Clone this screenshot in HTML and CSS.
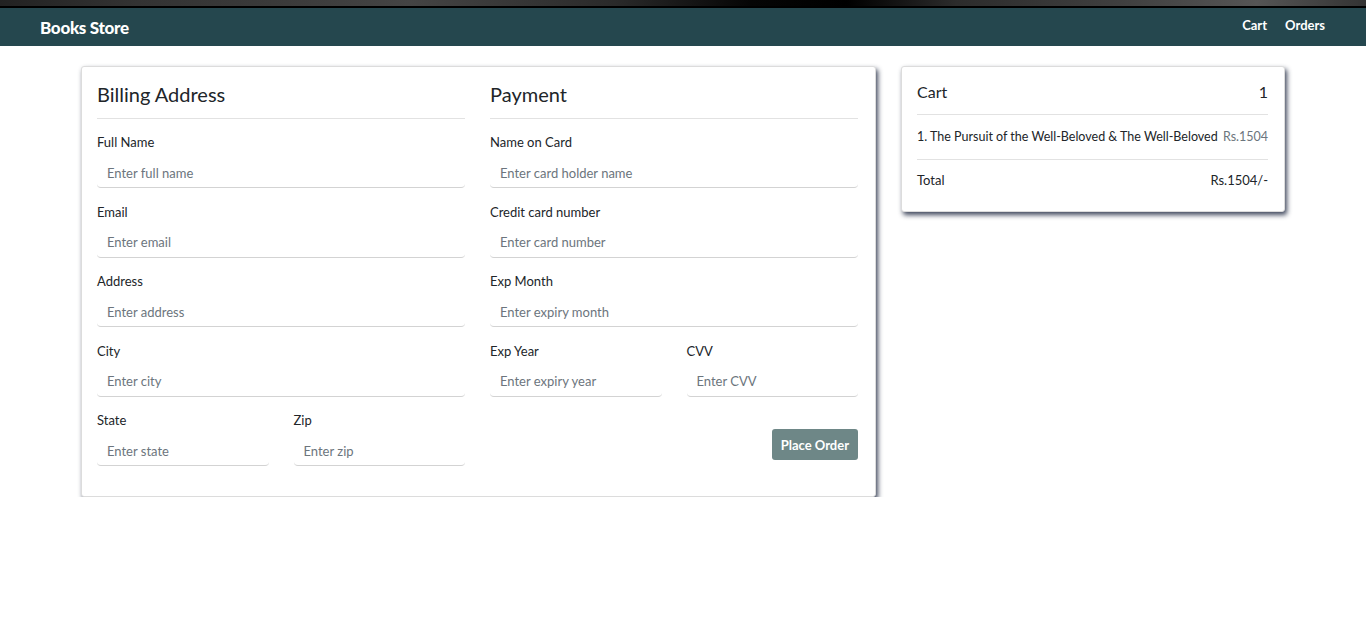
FILE: index.html
```html
<!DOCTYPE html>
<html lang="en">
<head>
<meta charset="utf-8">
<title>Books Store - Checkout</title>
<link rel="stylesheet" href="styles.css">
</head>
<body>
<div class="topstrip"></div>
<nav class="navbar">
  <a class="brand" href="#">Books Store</a>
  <div class="navlinks">
    <a href="#">Cart</a>
    <a href="#">Orders</a>
  </div>
</nav>
<main class="page">
  <section class="card checkout">
    <div class="col">
      <h2 class="heading">Billing Address</h2>
      <hr class="rule">
      <div class="group"><label>Full Name</label><input type="text" placeholder="Enter full name"></div>
      <div class="group"><label>Email</label><input type="text" placeholder="Enter email"></div>
      <div class="group"><label>Address</label><input type="text" placeholder="Enter address"></div>
      <div class="group"><label>City</label><input type="text" placeholder="Enter city"></div>
      <div class="pair">
        <div class="group"><label>State</label><input type="text" placeholder="Enter state"></div>
        <div class="group"><label>Zip</label><input type="text" placeholder="Enter zip"></div>
      </div>
    </div>
    <div class="col">
      <h2 class="heading">Payment</h2>
      <hr class="rule">
      <div class="group"><label>Name on Card</label><input type="text" placeholder="Enter card holder name"></div>
      <div class="group"><label>Credit card number</label><input type="text" placeholder="Enter card number"></div>
      <div class="group"><label>Exp Month</label><input type="text" placeholder="Enter expiry month"></div>
      <div class="pair">
        <div class="group"><label>Exp Year</label><input type="text" placeholder="Enter expiry year"></div>
        <div class="group"><label>CVV</label><input type="text" placeholder="Enter CVV"></div>
      </div>
      <div class="actions"><button class="btn">Place Order</button></div>
    </div>
  </section>
  <aside class="card cart">
    <div class="cart-row cart-title"><span>Cart</span><span>1</span></div>
    <hr class="rule">
    <div class="cart-row cart-item"><span>1. The Pursuit of the Well-Beloved &amp; The Well-Beloved</span><span class="price">Rs.1504</span></div>
    <hr class="rule rule-last">
    <div class="cart-row cart-total"><span>Total</span><span>Rs.1504/-</span></div>
  </aside>
</main>
</body>
</html>
```
FILE: styles.css
```css
* { box-sizing: border-box; }
body {
  margin: 0;
  font-family: Lato, "Noto Sans", sans-serif;
  color: #212529;
  background: #fff;
}
.topstrip {
  height: 8px;
  background:
    linear-gradient(180deg, transparent 0, transparent 6px, #000 6px, #000 8px),
    linear-gradient(90deg, #222 0%, #333 10%, #3a3a3a 20%, #444 30%, #2a2a2a 45%, #050505 55%, #000 62%, #2c2c2c 70%, #3f3f3f 82%, #555 92%, #333 100%);
}
.navbar {
  height: 38px;
  background: #25474e;
  display: flex;
  align-items: center;
  justify-content: space-between;
  padding: 0 41px 0 40px;
}
.navbar a { color: #fff; text-decoration: none; }
.brand { font-weight: 900; font-size: 17px; letter-spacing: -0.3px; }
.navlinks { display: flex; gap: 18px; font-size: 13px; font-weight: 700; padding-bottom: 4px; padding-left: 2px; }
.page {
  display: flex;
  align-items: flex-start;
  justify-content: center;
  gap: 25px;
  padding-top: 20px;
}
.card {
  background: #fff;
  border: 1px solid #dcdcdc;
  border-radius: 3px;
  box-shadow: 2px 3px 5px rgba(30, 40, 65, 0.85);
}
.checkout {
  width: 795px;
  padding: 15px 16px 16px 15px;
  display: grid;
  grid-template-columns: 368px 368px;
  column-gap: 25px;
}
.heading {
  margin: 0;
  font-size: 20px;
  line-height: 24px;
  font-weight: 400;
}
.rule {
  border: 0;
  border-top: 1px solid #e2e2e2;
  margin: 12px 0 13px;
}
.group { margin-bottom: 13.5px; }
.group label {
  display: block;
  font-size: 13px;
  line-height: 20px;
}
.group input {
  display: block;
  width: 100%;
  height: 30px;
  margin-top: 6px;
  border: 0;
  border-bottom: 1px solid #d3d3d3;
  border-radius: 4px;
  padding: 0 10px;
  font-family: inherit;
  font-size: 13px;
  color: #495057;
  outline: none;
}
.group input::placeholder { color: #6c757d; }
.pair { display: grid; grid-template-columns: 1fr 1fr; column-gap: 25px; }
.actions { display: flex; justify-content: flex-end; margin-top: 19px; }
.btn {
  background: #6e8787;
  color: #fff;
  border: 0;
  border-radius: 3px;
  font-family: inherit;
  font-weight: 700;
  font-size: 13px;
  height: 31px;
  padding: 0 9px;
}
.cart {
  width: 384px;
  padding: 15px 16px 21px 15px;
}
.cart .rule { margin: 12px 0 12px; }
.cart .rule-last { margin-bottom: 10px; }
.cart-row { display: flex; justify-content: space-between; gap: 4px; line-height: 20px; white-space: nowrap; }
.cart-title { font-size: 16px; }
.cart-item { font-size: 12.5px; }
.cart-total { font-size: 13px; }
.price { color: #6c757d; }
```
